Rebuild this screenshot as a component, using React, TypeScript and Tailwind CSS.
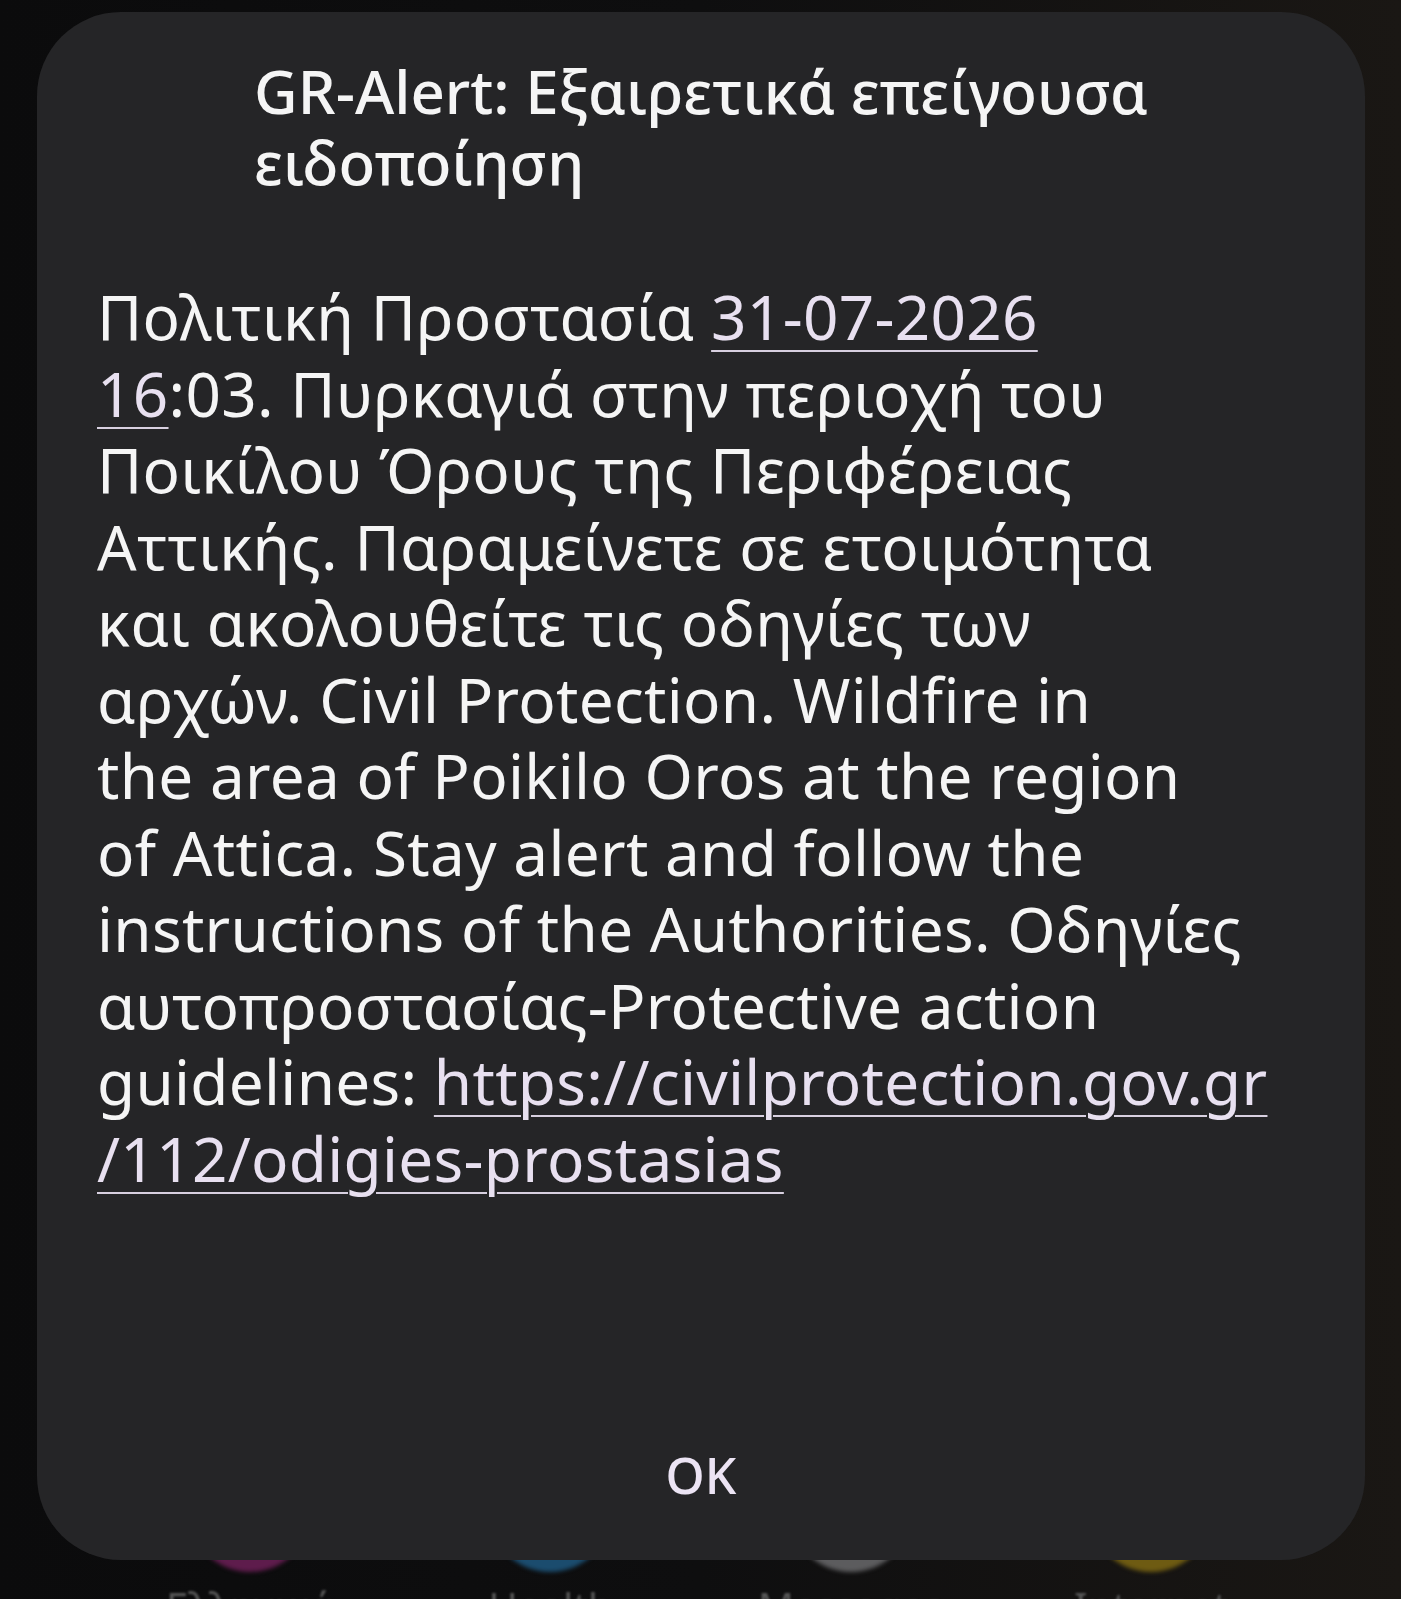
import React from 'react';

// Dimmed home-screen dock behind the alert
const dock = [
  { color: 'bg-[#5e1c4c]', label: 'Ελληνικά' },
  { color: 'bg-[#1b4c6e]', label: 'Health' },
  { color: 'bg-[#5c5c5e]', label: 'Messages' },
  { color: 'bg-[#6e5b12]', label: 'Internet' },
];

function Link({ children }: { children: React.ReactNode }) {
  return (
    <span className="text-[#e8e0f0] underline decoration-2 underline-offset-[10px] decoration-[#d8d0e0]">
      {children}
    </span>
  );
}

const lines: React.ReactNode[] = [
  <>Πολιτική Προστασία <Link>31-07-2026</Link></>,
  <><Link>16</Link>:03. Πυρκαγιά στην περιοχή του</>,
  'Ποικίλου Όρους της Περιφέρειας',
  'Αττικής. Παραμείνετε σε ετοιμότητα',
  'και ακολουθείτε τις οδηγίες των',
  'αρχών. Civil Protection. Wildfire in',
  'the area of Poikilo Oros at the region',
  'of Attica. Stay alert and follow the',
  'instructions of the Authorities. Οδηγίες',
  'αυτοπροστασίας-Protective action',
  <>guidelines: <Link>https://civilprotection.gov.gr</Link></>,
  <Link>/112/odigies-prostasias</Link>,
];

export default function App() {
  return (
    <div className="relative h-[1599px] w-full overflow-hidden bg-gradient-to-r from-[#0b0b0c] via-[#0e0e0f] to-[#1a1714] font-['Noto_Sans',sans-serif]">
      {/* home screen */}
      <div className="flex h-full flex-col justify-end">
        <div className="grid grid-cols-4 px-[100px] -mb-[28px]">
          {dock.map((d) => (
            <div key={d.label} className="flex flex-col items-center gap-[15px]">
              <div className={`h-[124px] w-[124px] rounded-full ${d.color} blur-[2px]`} />
              <span className="text-[40px] leading-none text-[#555555] blur-[1px]">{d.label}</span>
            </div>
          ))}
        </div>
      </div>

      {/* cell broadcast dialog */}
      <div className="absolute left-[37px] top-[12px] flex h-[1548px] w-[1328px] flex-col rounded-[84px] bg-[#252527] px-[60px] pt-[44px] text-[#f5f5f5]">
        <div className="flex justify-center">
          <h1 className="text-[60px] font-medium leading-[71px]">
            GR-Alert: Εξαιρετικά επείγουσα
            <br />
            ειδοποίηση
          </h1>
        </div>

        <div className="mt-[80px] text-[62px] leading-[76.5px] tracking-[0.3px] whitespace-nowrap">
          {lines.map((l, i) => (
            <div key={i}>{l}</div>
          ))}
        </div>

        <div className="mt-auto flex justify-center pb-[60px]">
          <button className="text-[50px] font-medium leading-none text-[#ece4f4]">OK</button>
        </div>
      </div>
    </div>
  );
}
